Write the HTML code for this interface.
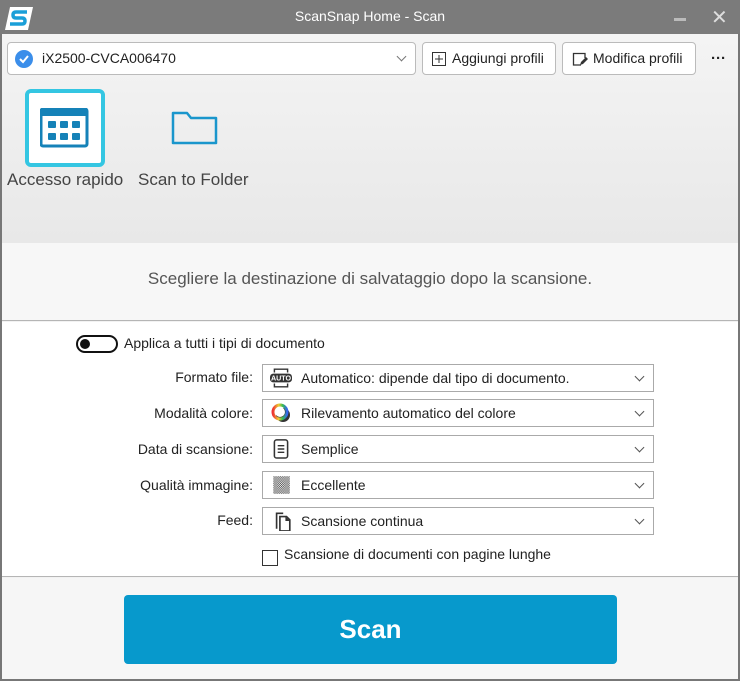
<!DOCTYPE html>
<html><head><meta charset="utf-8"><style>
*{margin:0;padding:0;box-sizing:border-box}
body{width:740px;height:681px;overflow:hidden;font-family:"Liberation Sans",sans-serif;background:#777;position:relative;color:#222}
.abs{position:absolute}
.title{left:0;top:0;width:740px;height:34px;background:#7b7b7b;color:#fff;font-size:14px;text-align:center;line-height:32px}
.win{left:2px;top:34px;width:736px;height:645px;background:#f2f2f2}
.top{left:2px;top:34px;width:736px;height:209px;background:linear-gradient(#f4f4f4,#e8e8e8)}
.band{left:2px;top:243px;width:736px;height:78px;background:#f7f7f7;border-bottom:1px solid #b5b5b5;font-size:17px;color:#555;text-align:center;line-height:72px}
.set{left:2px;top:322px;width:736px;height:255px;background:#fff;border-bottom:1px solid #b5b5b5}
.bot{left:2px;top:578px;width:736px;height:101px;background:#f6f6f6}
.btn{background:#fff;border:1px solid #bbb;border-radius:4px;font-size:14px;height:33px;line-height:31px}
.lbl{font-size:14px;text-align:right;width:250px;left:3px}
.sel{left:262px;width:392px;height:28px;border:1px solid #aaa;background:#fff;font-size:14px;line-height:26px;padding-left:38px}
.sel:after{content:"";position:absolute;right:10px;top:8px;width:6px;height:6px;border-right:1px solid #555;border-bottom:1px solid #555;transform:rotate(45deg)}
.ic{position:absolute;left:7px;top:3px;width:22px;height:20px}
</style></head><body>
<div class="abs title">ScanSnap Home - Scan</div>
<svg class="abs" style="left:4px;top:5px" width="30" height="26"><polygon points="6,2 29,2 24,25 1,25" fill="#fff"/><path d="M23 7H12q-3 0-3 3t3 3h6q3 0 3 3t-3 3H6" stroke="#1a9fd8" stroke-width="3.5" fill="none"/></svg>
<div class="abs" style="left:674px;top:18px;width:12px;height:3px;background:#bbb"></div>
<div class="abs" style="left:711px;top:5px;color:#ddd;font-size:20px">✕</div>
<div class="abs win"></div>
<div class="abs top"></div>
<div class="abs btn" style="left:7px;top:42px;width:409px;font-size:14px;padding-left:34px">iX2500-CVCA006470
<svg style="position:absolute;left:7px;top:7px" width="18" height="18"><circle cx="9" cy="9" r="9" fill="#3b8eea"/><path d="M5 9l3 3 5-6" stroke="#fff" stroke-width="2" fill="none"/></svg>
<span style="position:absolute;right:10px;top:10px;width:7px;height:7px;border-right:1px solid #777;border-bottom:1px solid #777;transform:rotate(45deg)"></span></div>
<div class="abs btn" style="left:422px;top:42px;width:134px;padding-left:29px">Aggiungi profili
<svg style="position:absolute;left:9px;top:9px" width="14" height="14"><rect x="0.5" y="0.5" width="13" height="13" fill="none" stroke="#333"/><path d="M7 3v8M3 7h8" stroke="#333"/></svg></div>
<div class="abs btn" style="left:562px;top:42px;width:134px;padding-left:30px">Modifica profili
<svg style="position:absolute;left:9px;top:9px" width="16" height="15"><path d="M9 13H1.5V1.5H13V6" fill="none" stroke="#333" stroke-width="1.3"/><path d="M8 13l1-3 5-5 2 2-5 5z" fill="#333"/></svg></div>
<div class="abs" style="left:711px;top:50px;font-size:15px;font-weight:bold">···</div>
<div class="abs" style="left:25px;top:89px;width:80px;height:78px;border:4px solid #34c6e2;border-radius:6px;background:#fff"></div>
<svg class="abs" style="left:40px;top:108px" width="50" height="40"><rect x="1" y="1" width="46" height="37" rx="2" fill="none" stroke="#1582b8" stroke-width="3"/><rect x="1" y="1" width="46" height="7" fill="#1582b8"/><g fill="#1582b8"><rect x="8" y="13" width="8" height="7" rx="1"/><rect x="20" y="13" width="8" height="7" rx="1"/><rect x="32" y="13" width="8" height="7" rx="1"/><rect x="8" y="25" width="8" height="7" rx="1"/><rect x="20" y="25" width="8" height="7" rx="1"/><rect x="32" y="25" width="8" height="7" rx="1"/></g></svg>
<svg class="abs" style="left:171px;top:110px" width="48" height="36"><path d="M2 33V3h14l4 5h25v25z" fill="none" stroke="#1a96cc" stroke-width="2.5" stroke-linejoin="round"/></svg>
<div class="abs" style="left:7px;top:170px;font-size:17px;color:#444">Accesso rapido</div>
<div class="abs" style="left:138px;top:170px;font-size:17px;color:#444">Scan to Folder</div>
<div class="abs band">Scegliere la destinazione di salvataggio dopo la scansione.</div>
<div class="abs set"></div>
<div class="abs" style="left:76px;top:335px;width:42px;height:18px;border:2px solid #111;border-radius:9px"><div style="position:absolute;left:2px;top:2px;width:10px;height:10px;border-radius:50%;background:#111"></div></div>
<div class="abs" style="left:124px;top:335px;font-size:14px">Applica a tutti i tipi di documento</div>
<div class="abs lbl" style="top:369px">Formato file:</div>
<div class="abs lbl" style="top:405px">Modalità colore:</div>
<div class="abs lbl" style="top:441px">Data di scansione:</div>
<div class="abs lbl" style="top:477px">Qualità immagine:</div>
<div class="abs lbl" style="top:512px">Feed:</div>
<div class="abs sel" style="top:364px">Automatico: dipende dal tipo di documento.<svg class="ic" viewBox="0 0 20 18"><path d="M4 4V1h12v3M4 14v3h12v-3" stroke="#333" fill="none" stroke-width="1.3"/><rect x="0" y="5" width="20" height="8" rx="3" fill="#333"/><text x="10" y="11.5" font-size="6.5" fill="#fff" text-anchor="middle" font-family="Liberation Sans" font-weight="bold">AUTO</text></svg></div>
<div class="abs sel" style="top:399px">Rilevamento automatico del colore<svg class="ic" viewBox="0 0 20 20"><circle cx="12" cy="12" r="7" fill="#333"/><circle cx="9" cy="9" r="7" fill="none" stroke="url(#g)" stroke-width="3"/><defs><linearGradient id="g"><stop offset="0" stop-color="#e33"/><stop offset=".4" stop-color="#ec3"/><stop offset=".7" stop-color="#3b5"/><stop offset="1" stop-color="#36e"/></linearGradient></defs><circle cx="9" cy="9" r="5" fill="#fff"/></svg></div>
<div class="abs sel" style="top:435px">Semplice<svg class="ic" viewBox="0 0 20 18"><rect x="4" y="0.7" width="12" height="16.5" rx="2" fill="none" stroke="#333" stroke-width="1.4"/><path d="M7 6h6M7 9h6M7 12h6" stroke="#333" stroke-width="1.3"/></svg></div>
<div class="abs sel" style="top:471px">Eccellente<svg class="ic" viewBox="0 0 20 18"><defs><pattern id="p" width="2" height="2" patternUnits="userSpaceOnUse"><rect width="1" height="1" fill="#444"/><rect x="1" y="1" width="1" height="1" fill="#444"/></pattern></defs><rect x="3" y="1" width="15" height="16" fill="url(#p)"/></svg></div>
<div class="abs sel" style="top:507px">Scansione continua<svg class="ic" viewBox="0 0 20 18"><path d="M6 16V2h6" stroke="#333" fill="none" stroke-width="1.5"/><path d="M9 5h6l3 3v10H9z" fill="none" stroke="#333" stroke-width="1.5"/><path d="M14 5v4h4z" fill="#333"/></svg></div>
<div class="abs" style="left:262px;top:550px;width:16px;height:16px;border:1px solid #333;background:#fff"></div>
<div class="abs" style="left:284px;top:546px;font-size:14px">Scansione di documenti con pagine lunghe</div>
<div class="abs bot"></div>
<div class="abs" style="left:124px;top:595px;width:493px;height:69px;background:#0799cc;border-radius:4px;color:#fff;font-size:26px;font-weight:bold;text-align:center;line-height:68px">Scan</div>
</body></html>
